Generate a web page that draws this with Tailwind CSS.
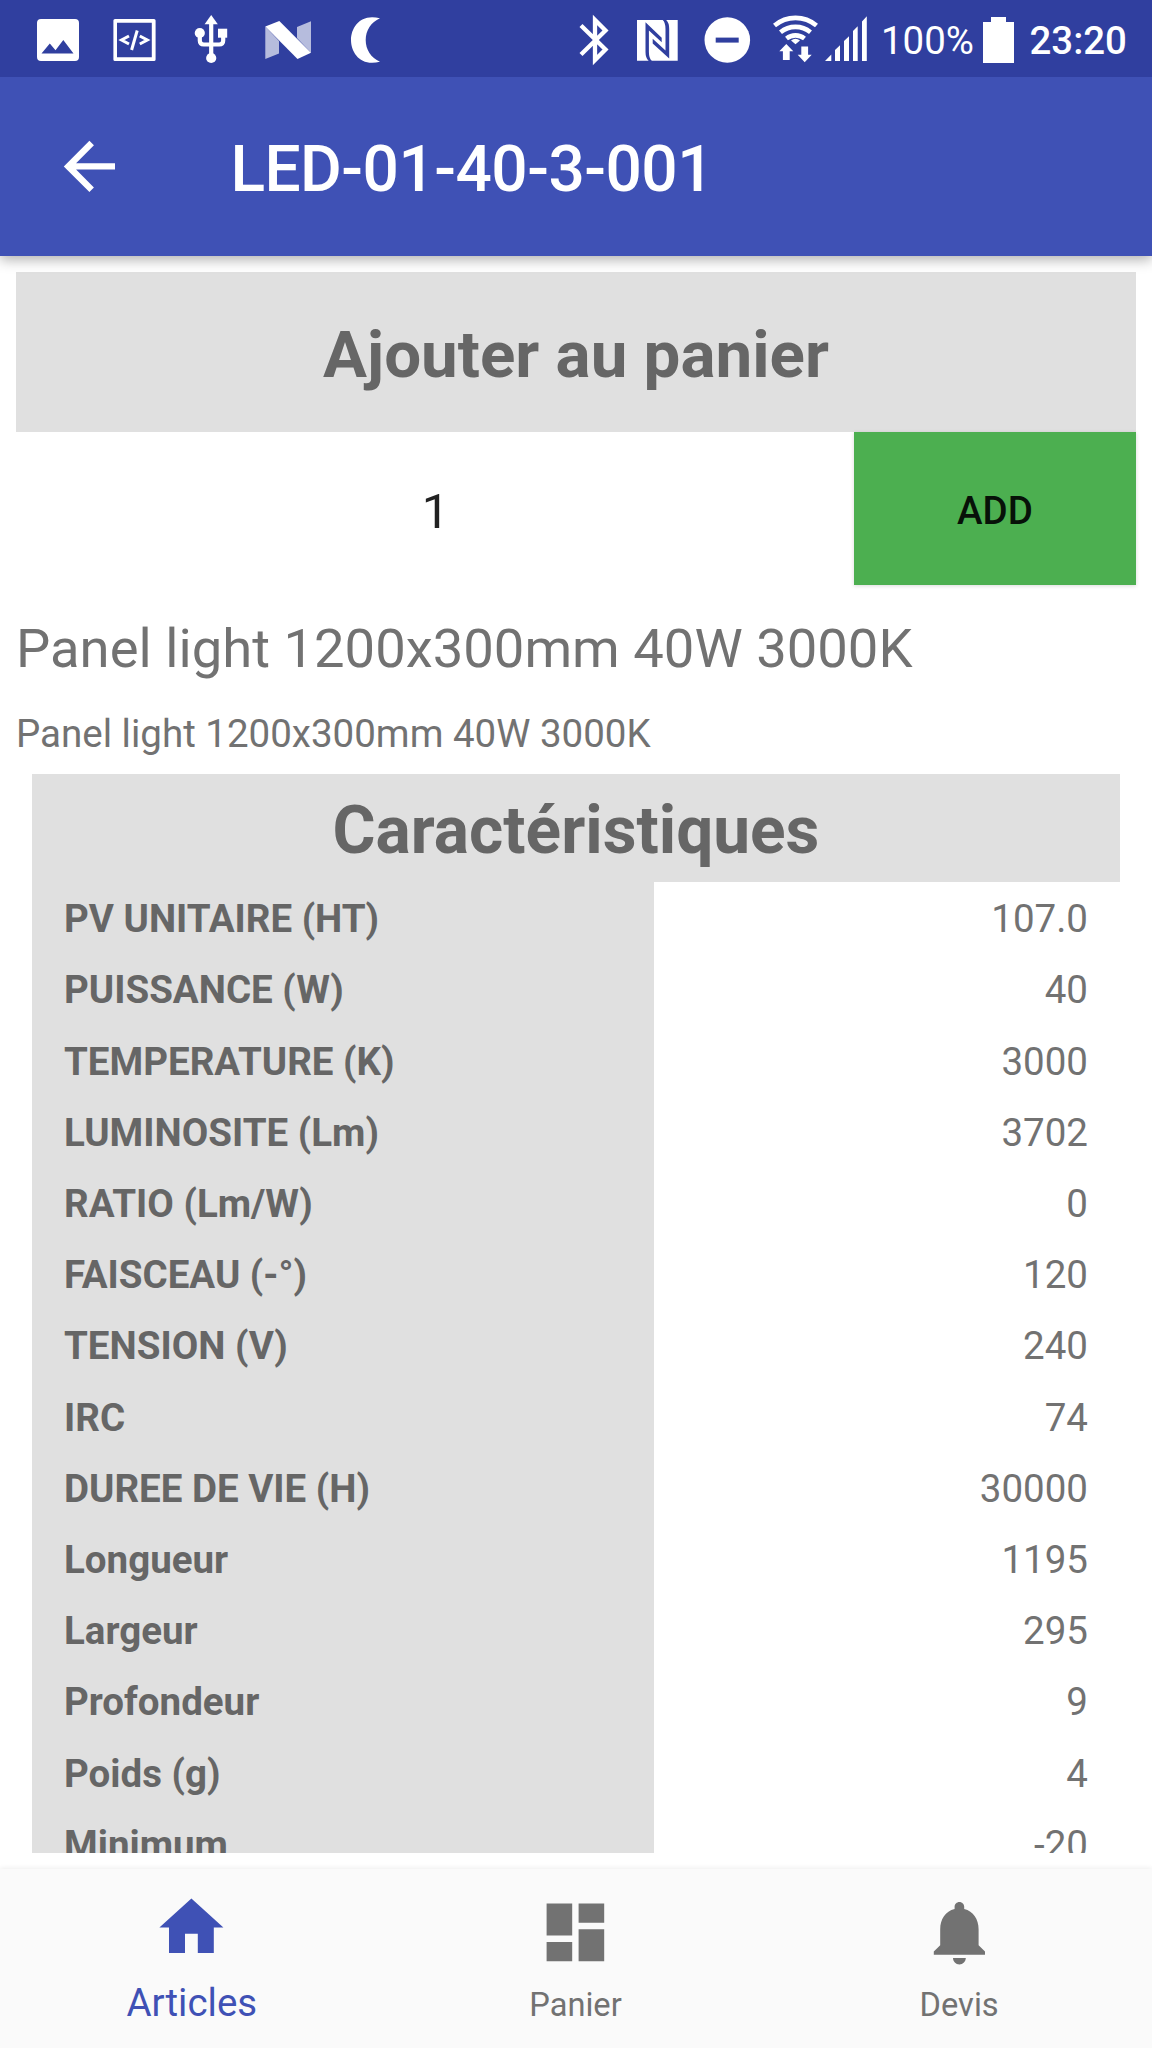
<!DOCTYPE html>
<html lang="fr">
<head>
<meta charset="utf-8">
<title>LED-01-40-3-001</title>
<script src="https://cdn.jsdelivr.net/npm/@tailwindcss/browser@4"></script>
</head>
<body class="bg-white">
<div class="flex h-[2048px] w-[1152px] flex-col overflow-hidden bg-white font-[Roboto,sans-serif] text-[38.500px] text-[#727272]">

  <!-- Status bar -->
  <div class="z-20 flex h-[77px] shrink-0 bg-[#303f9f] text-white">
    <svg class="h-[77px] w-[400px] shrink-0" viewBox="0 0 400 77" fill="#fff">
      <!-- picture -->
      <path fill-rule="evenodd" d="M41 19h34a4 4 0 0 1 4 4v34a4 4 0 0 1-4 4H41a4 4 0 0 1-4-4V23a4 4 0 0 1 4-4zM41.500 53.500H73.500L63.300 40l-7.800 10.300-5.700-6.800z"/>
      <!-- code -->
      <path fill-rule="evenodd" d="M115 19h39a1.600 1.600 0 0 1 1.600 1.600v38.800a1.600 1.600 0 0 1-1.600 1.600h-39a1.600 1.600 0 0 1-1.600-1.600V20.600a1.600 1.600 0 0 1 1.600-1.600zM117 22.700v34.600h34.800V22.700z"/>
      <g fill="none" stroke="#fff" stroke-width="3"><path d="M129 36l-7.500 4 7.500 4M139.800 36l7.500 4-7.500 4"/><path d="M137.200 30.500l-5.600 19.500"/></g>
      <!-- usb -->
      <path d="M211.200 15l6.600 9.300h-13.200z"/>
      <path d="M211.200 22v34M199.800 33v7.500q0 4 4 4h15.400q4 0 4-4v-5" fill="none" stroke="#fff" stroke-width="4.200"/>
      <circle cx="199.800" cy="33" r="5.100"/><circle cx="211.200" cy="58" r="5.100"/><path d="M218 28.700h9.200v9H218z"/>
      <!-- N -->
      <path fill-opacity=".65" d="M265.300 26.500L279 41v12.500l-13.700 5.500zM311 21.300v31.500L297 38V27z"/>
      <path d="M265.300 26.500l14-5.500L311 52.700l-13.500 6.300z"/>
      <!-- moon -->
      <path d="M380 18.300C361 13 351 27 351 40s10 27 29 21.700c-9-4-14.300-12-14.300-21.700S371 22.300 380 18.300z"/>
    </svg>
    <svg class="ml-[160px] h-[77px] w-[310px] shrink-0" viewBox="560 0 310 77" fill="#fff">
      <!-- bluetooth -->
      <path d="M581 25.500L605.500 49.500 595 60V20L605.500 30.500 581 54.500" fill="none" stroke="#fff" stroke-width="4.300"/>
      <!-- nfc -->
      <path d="M637 20h40.700v40.700h-40.700z"/>
      <g fill="#303f9f">
        <path d="M645.500 22.300L661.700 37.700v4.500L648.900 30.500V52q0 6.500 3 8.900h-3.200q-3.200-3-3.200-9z"/>
        <path d="M669.200 58.500L652.700 43.500V38.700L665.500 50.500V29q0-6.500-3-9.200h3.500q3.200 3 3.200 9z"/>
      </g>
      <!-- do not disturb -->
      <circle cx="727.300" cy="40" r="22.800"/><path fill="#303f9f" d="M715.700 37.600h23v5h-23z"/>
      <!-- wifi -->
      <g fill="none" stroke="#fff" stroke-width="4.600">
        <path d="M774.500 25.600a32.500 32.500 0 0 1 42 0"/><path d="M780.500 32.300a23.500 23.500 0 0 1 30 0"/><path d="M786.500 38.500a14.500 14.500 0 0 1 18 0"/>
      </g>
      <path d="M791 40.500q4.500-3.400 9 0l-4.500 3.700z"/>
      <path d="M786.300 44l7 7.300h-3.600V60h-6.800v-8.700h-3.600zM804.700 62.300l-7-7.500h3.600V46.500h6.800v8.300h3.600z"/>
      <!-- signal -->
      <path d="M825 61h6.300v-6.500zM835 61h5v-15.700l-5 4.700zM844 61h5V36.300l-5 4.700zM853 61h4.700V26.300l-4.700 4.700zM862 61h4.800V16.300L862 21.500z"/>
    </svg>
    <span class="ml-[11px] w-[102px] pt-[2px] text-[38.400px] leading-[77px]">100%</span>
    <svg class="h-[77px] w-[31px] shrink-0" viewBox="983 0 31 77" fill="#fff"><path d="M991 17h15v5h8v41h-31V22h8z"/></svg>
    <span class="ml-[15.500px] pt-[2px] text-[38.400px] leading-[77px] font-medium">23:20</span>
  </div>

  <!-- Toolbar -->
  <header class="z-10 flex h-[179px] shrink-0 items-center bg-[#3f51b5] pl-[51.200px] text-white shadow-[0_4px_12px_rgba(0,0,0,0.3)]">
    <svg class="size-[76.800px]" viewBox="0 0 24 24" fill="currentColor"><path d="M20 11H7.830l5.590-5.590L12 4l-8 8 8 8 1.410-1.410L7.830 13H20v-2z"/></svg>
    <h1 class="ml-[102.400px] pt-[7px] text-[64px] leading-[76px] font-medium tracking-[-0.520px]">LED-01-40-3-001</h1>
  </header>

  <main class="mt-4 flex h-[1581px] shrink-0 flex-col overflow-hidden px-4">
    <h2 class="h-[160px] shrink-0 bg-[#e0e0e0] pt-[6px] text-center text-[65.500px] leading-[154px] font-bold text-[#666]">Ajouter au panier</h2>
    <div class="flex h-[153px] shrink-0">
      <div class="flex-1 pt-[6px] pl-px text-center text-[48.960px] leading-[148px] text-[#212121]">1</div>
      <button class="w-[282px] bg-[#4caf50] pt-[3px] font-medium leading-[149px] text-[#071108] shadow-[0_1px_4px_rgba(0,0,0,0.15)]">ADD</button>
    </div>
    <p class="mt-8 h-16 shrink-0 text-[54.400px] leading-[64px]">Panel light 1200x300mm 40W 3000K</p>
    <p class="mt-[28px] h-[50px] shrink-0 leading-[50px]">Panel light 1200x300mm 40W 3000K</p>

    <section class="mx-4 mt-[15px] flex shrink-0 flex-col">
      <h2 class="h-[107.500px] bg-[#e0e0e0] pt-[7px] text-center text-[65.800px] leading-[100px] font-bold text-[#666]">Caractéristiques</h2>
      <div class="flex leading-[71.200px]">
        <ul class="w-[621.500px] bg-[#e0e0e0] pt-[1.700px] pl-8 font-bold text-[#666]">
          <li>PV UNITAIRE (HT)</li><li>PUISSANCE (W)</li><li>TEMPERATURE (K)</li><li>LUMINOSITE (Lm)</li><li>RATIO (Lm/W)</li><li>FAISCEAU (-°)</li><li>TENSION (V)</li><li>IRC</li><li>DUREE DE VIE (H)</li><li>Longueur</li><li>Largeur</li><li>Profondeur</li><li>Poids (g)</li><li>Minimum</li>
        </ul>
        <ul class="flex-1 pt-[1.700px] pr-8 text-right">
          <li>107.0</li><li>40</li><li>3000</li><li>3702</li><li>0</li><li>120</li><li>240</li><li>74</li><li>30000</li><li>1195</li><li>295</li><li>9</li><li>4</li><li>-20</li>
        </ul>
      </div>
    </section>
  </main>

  <!-- Bottom navigation -->
  <nav class="mt-[16px] grid h-[179px] shrink-0 grid-cols-3 bg-[#fafafa] pr-px text-center text-[32.640px] shadow-[0_-1px_5px_rgba(0,0,0,0.07)]">
    <a class="flex flex-col items-center pt-[19.500px] text-[38.450px] text-[#3f51b5]">
      <svg class="size-[76.800px]" viewBox="0 0 24 24" fill="currentColor"><path d="M10 20v-6h4v6h5v-8h3L12 3 2 12h3v8z"/></svg>
      <span class="mt-[13px] leading-[50px]">Articles</span>
    </a>
    <a class="flex flex-col items-center pt-[25px]">
      <svg class="size-[76.800px]" viewBox="0 0 24 24" fill="currentColor"><path d="M3 13h8V3H3v10zm0 8h8v-6H3v6zm10 0h8V11h-8v10zm0-18v6h8V3h-8z"/></svg>
      <span class="mt-[9px] leading-[50px]">Panier</span>
    </a>
    <a class="flex flex-col items-center pt-[25px]">
      <svg class="size-[76.800px]" viewBox="0 0 24 24" fill="currentColor"><path d="M12 22c1.100 0 2-.9 2-2h-4c0 1.100.89 2 2 2zm6-6v-5c0-3.070-1.640-5.640-4.500-6.320V4c0-.83-.67-1.500-1.500-1.500s-1.500.67-1.500 1.500v.68C7.630 5.360 6 7.920 6 11v5l-2 2v1h16v-1l-2-2z"/></svg>
      <span class="mt-[9px] leading-[50px]">Devis</span>
    </a>
  </nav>
</div>
</body>
</html>
